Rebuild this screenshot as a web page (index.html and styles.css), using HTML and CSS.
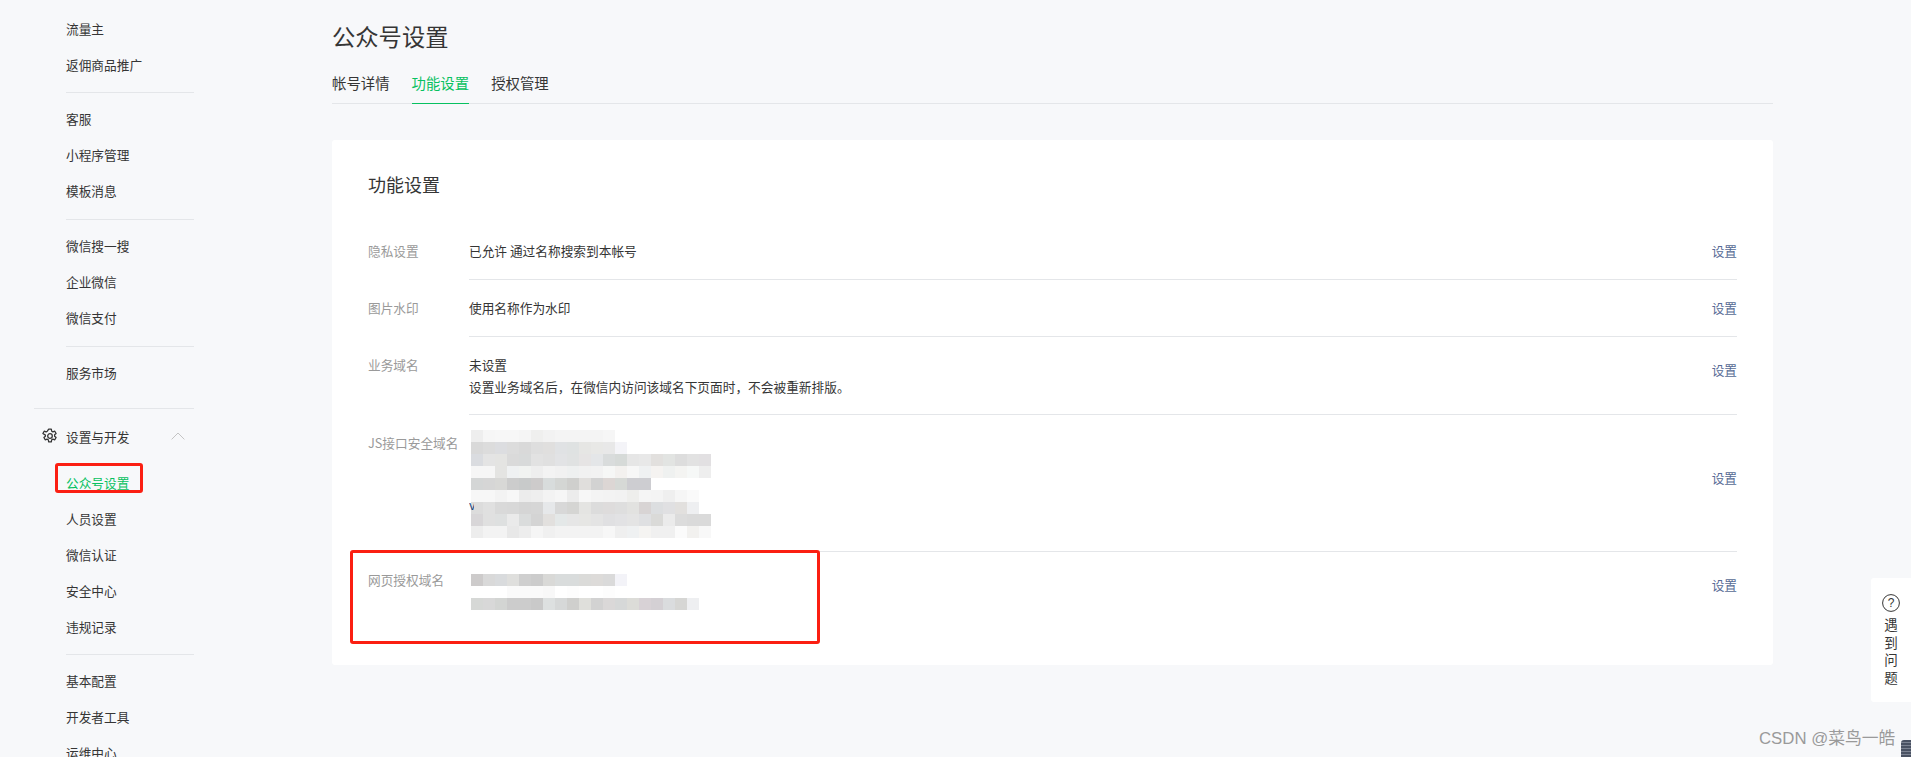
FILE: index.html
```html
<!DOCTYPE html>
<html lang="zh-CN">
<head>
<meta charset="utf-8">
<title>公众号设置</title>
<link rel="stylesheet" href="styles.css">
</head>
<body>
<div class="page">
  <nav class="side">
    <ul class="group first">
      <li>流量主</li>
      <li>返佣商品推广</li>
    </ul>
    <ul class="group">
      <li>客服</li>
      <li>小程序管理</li>
      <li>模板消息</li>
    </ul>
    <ul class="group">
      <li>微信搜一搜</li>
      <li>企业微信</li>
      <li>微信支付</li>
    </ul>
    <ul class="group">
      <li>服务市场</li>
    </ul>
    <div class="sec">
      <div class="sec-head">
        <svg class="gear" viewBox="0 0 16 16" width="16" height="16"><path d="M6.7 1.2h2.6l.4 2 1.2.7 1.9-.7 1.3 2.3-1.5 1.3v1.4l1.5 1.3-1.3 2.3-1.9-.7-1.2.7-.4 2H6.7l-.4-2-1.2-.7-1.9.7-1.3-2.3 1.5-1.3V7.1L.9 5.5l1.3-2.3 1.9.7 1.2-.7z" fill="none" stroke="#353535" stroke-width="1.3" stroke-linejoin="round"/><circle cx="8" cy="8" r="2.3" fill="none" stroke="#353535" stroke-width="1.3"/></svg>
        <span class="sec-title">设置与开发</span>
        <svg class="chev" viewBox="0 0 14 8" width="14" height="8"><path d="M.6 7.4 7 1l6.4 6.4" fill="none" stroke="#c4c4c4" stroke-width="1"/></svg>
      </div>
      <ul class="sub">
        <li class="on">公众号设置</li>
        <li>人员设置</li>
        <li>微信认证</li>
        <li>安全中心</li>
        <li>违规记录</li>
      </ul>
    </div>
    <ul class="group">
      <li>基本配置</li>
      <li>开发者工具</li>
      <li>运维中心</li>
    </ul>
  </nav>
  <main class="main">
    <h1 class="title">公众号设置</h1>
    <div class="tabs">
      <span class="tab">帐号详情</span>
      <span class="tab on">功能设置</span>
      <span class="tab">授权管理</span>
    </div>
    <section class="card">
      <h2 class="card-title">功能设置</h2>
      <div class="row">
        <div class="lab">隐私设置</div>
        <div class="val">
          <div>已允许 通过名称搜索到本帐号</div>
          <a class="act">设置</a>
        </div>
      </div>
      <div class="row">
        <div class="lab">图片水印</div>
        <div class="val">
          <div>使用名称作为水印</div>
          <a class="act">设置</a>
        </div>
      </div>
      <div class="row">
        <div class="lab">业务域名</div>
        <div class="val val-tall">
          <div>未设置<br>设置业务域名后，在微信内访问该域名下页面时，不会被重新排版。</div>
          <a class="act act-low">设置</a>
        </div>
      </div>
      <div class="row">
        <div class="lab">JS接口安全域名</div>
        <div class="val val-js">
          <div class="mosaic" data-set="js"><span class="frag">v</span></div>
          <a class="act act-mid">设置</a>
        </div>
      </div>
      <div class="row">
        <div class="lab">网页授权域名</div>
        <div class="val val-last">
          <div class="mosaic" data-set="oauth"></div>
          <a class="act">设置</a>
        </div>
      </div>
    </section>
  </main>
</div>
<div class="mark mark-side"></div>
<div class="mark mark-row"></div>
<aside class="help">
  <svg viewBox="0 0 18 18" width="18" height="18"><circle cx="9" cy="9" r="8.4" fill="none" stroke="#353535" stroke-width="1"/><text x="9" y="13" text-anchor="middle" class="q">?</text></svg>
  <span>遇</span><span>到</span><span>问</span><span>题</span>
</aside>
<div class="wm">CSDN @菜鸟一皓</div>
<div class="corner"></div>
<script src="mosaic.js"></script>
</body>
</html>
```
FILE: styles.css
```css
* { box-sizing: border-box; }
html, body { margin: 0; height: 100%; overflow: hidden; }
body {
  background: #f7f8fa;
  color: #353535;
  font-family: "Noto Sans CJK SC", "Liberation Sans", sans-serif;
}
ul { list-style: none; margin: 0; padding: 0; }
.page { display: flex; height: 757px; overflow: hidden; }
.side { width: 332px; flex: none; padding: 11px 0 0 66px; }
.group, .sub { width: 128px; }
.group li, .sub li { height: 36px; line-height: 35px; font-size: 12.7px; white-space: nowrap; }
.group { border-top: 1px solid #e4e6e9; padding-top: 8px; margin-top: 10px; }
.group.first { border-top: 0; padding-top: 0; margin-top: 0; margin-bottom: -1px; }
.sec { margin: 17px 0 9px -32px; border-top: 1px solid #e4e6e9; padding-top: 9px; width: 160px; }
.sec + .group { margin-top: 0; }
.sub { margin: 11px 0 0 32px; }
.sub li.on { color: #07c160; }
.sec-head { display: flex; align-items: center; height: 36px; padding-left: 8px; }
.gear { margin-right: 8px; flex: none; }
.sec-title { font-size: 12.7px; flex: 1; }
.chev { margin-right: 9px; }
.main { width: 1441px; flex: none; }
.title { margin: 0; font-weight: 400; font-size: 23.3px; line-height: 32px; padding-top: 20px; color: #353535; }
.tabs { display: flex; gap: 22px; margin-top: 14px; border-bottom: 1px solid #e4e6e9; height: 38px; }
.tab { font-size: 14.4px; line-height: 33px; height: 38px; }
.tab.on { color: #07c160; border-bottom: 1px solid #07c160; }
.card { margin-top: 36px; background: #fff; border-radius: 3px; height: 525px; padding: 0 36px; }
.card-title { margin: 0; font-weight: 400; font-size: 18px; line-height: 26px; padding-top: 31px; height: 83px; }
.row { display: flex; font-size: 12.7px; line-height: 22px; }
.lab { width: 101px; flex: none; color: #9a9a9a; white-space: nowrap; padding-top: 17px; }
.val { flex: 1; display: flex; justify-content: space-between; align-items: flex-start; padding: 17px 0; border-bottom: 1px solid #e4e6e9; }
.val-tall { padding-bottom: 16px; }
.val-js { padding: 15px 0 13px; }
.val-last { padding-top: 22px; border-bottom: 0; }
.act { color: #576b95; white-space: nowrap; }
.act-low { margin-top: 5px; }
.act-mid { margin-top: 37px; }
.val-last .act { margin-top: 0; }
.mosaic { margin-left: 2px; position: relative; }
.mosaic-row { display: flex; height: 12px; }
.mosaic-cell { width: 12px; height: 12px; flex: none; }
.frag { position: absolute; left: -2px; top: 68px; width: 5px; height: 14px; overflow: hidden; font-size: 12.7px; line-height: 14px; color: #1f4a80; }
.mark { position: absolute; border: 3px solid #fb1f12; border-radius: 3px; }
.mark-side { left: 55px; top: 463px; width: 88px; height: 30px; }
.mark-row { left: 350px; top: 550px; width: 470px; height: 94px; }
.help {
  position: absolute; left: 1871px; top: 578px; width: 40px; height: 124px;
  background: #fff; border-radius: 3px 0 0 3px;
  display: flex; flex-direction: column; align-items: center;
  padding-top: 16px; font-size: 13.5px; line-height: 17.5px; color: #353535;
}
.help svg { margin-bottom: 4px; }
.q { font-size: 12px; fill: #353535; font-family: "Liberation Sans", sans-serif; }
.wm { position: absolute; left: 1759px; top: 727px; font-size: 16.8px; line-height: 24px; color: #9a9a9a; white-space: nowrap; font-family: "Liberation Sans", "Noto Sans CJK SC", sans-serif; }
.corner { position: absolute; left: 1901px; top: 740px; width: 10px; height: 17px; border-radius: 3px 0 0 0; background: repeating-linear-gradient(#4a5263 0 2px, #7b8291 2px 3px); }
```
FILE: mosaic.js
```js
var MOSAICS = {
  js: [
    "eee f6f6f6 f7f7f7 f7f7f7 f5f5f5 efefee f2f2f2 f4f4f4 f4f4f4 f4f4f4 f4f4f4 f6f6f6",
    "d9d9d9 dcdcdc dcdde0 dcdcdc d9d9d9 dedede e0dfde e0e2e4 dfe2e2 e6e6e4 e8e8e6 e8e8e8 f4f4f8",
    "dadce0 e4e4e4 e4e4e2 dadada d8dada e2e2e2 e0e0e0 e2e3e5 e0e2e2 e6e4e4 e4e6e8 d9dcdc d6dad8 e6e6e6 e8e8e8 e2e0de e2e4e2 dddddd e2e2e2 e2e0e2",
    "f6f6f6 f6f6f6 e4e4e2 eff1f2 f1f3f1 eeeeee f3f3f3 f1f1f1 eef0f0 f1f1f1 f2f2f2 f6f7f6 f3f1ef f7f7f7 eff1f2 f5f3f1 eff1f0 f4f4f2 f6f8f7 eeeeee",
    "d4d6d6 d6d6d6 d8d8d6 cccccc c8caca cdcbcb d8dcdc d4d6d4 cfcfcd e0dedc d2d2d2 dcd6d4 d6d9d6 cdcdd1 cdcdd1",
    "f7f7f7 f7f7f7 f3f3f3 f7f7f7 ececec eeeeee f3f3f3 f6f6f6 ececec f7f7f7 f4f4f4 f3f3f3 f2f2f2 eeeeec f5f5f5 f4f4f4 efefef f6f6f6 fafafa",
    "dcdcdc e0e0e0 d9d9d9 d8d8d8 d5d5d5 d6d6d6 e6e8ea d8d8d8 d5d5d3 e4e4e2 dcdcdc dedcdc dedede e2e2e0 d8d4d4 dcdee0 e0e0e2 e2e0de eeeff1",
    "d8d6d8 e0e0e0 dee0e0 eaeaea dadcdc d4d4d4 e2e0de e4e8e8 e6e6e6 e6e6e4 e4e4e4 e0e0e2 e2e2e4 e4e4e4 dfe0e2 dadad8 ebebeb dcdcdc dadada dadada",
    "ededed f3f3f3 f3f3f3 e8e8e8 ededed f5f5f5 f0f0f0 f3f3f3 f3f3f3 f3f3f3 f3f3f3 f7f7f7 efefef eff1f2 f5f4f2 f0f0f0 f0f0f0 fbfbfb f2f1ef f8f8f8"
  ],
  oauth: [
    "cdcbcb d9d9d9 d9dbdd dfdfdd cfcfcf cccccc d9d9d7 d9dcdc d9dcdc dbdbd9 dddbd9 dadada f3f3f8",
    "fff fff fff fafafa fafafa fafafa f8f8f8 fff fdfdfd fff fff fdfdfd",
    "d6d8d6 d8d8d8 d3d5d3 cccccc cccccc c9c9c9 dde0e0 d6d8d8 cfcfcd dfdfdb d2d2d2 dad8d8 d6d8d8 dcdcd8 d8d2d6 d4d0d4 dadcde d6d6d4 eeeff1"
  ]
};
document.querySelectorAll(".mosaic").forEach(function (box) {
  MOSAICS[box.dataset.set].forEach(function (line) {
    var row = document.createElement("div");
    row.className = "mosaic-row";
    line.split(" ").forEach(function (hex) {
      var cell = document.createElement("span");
      cell.className = "mosaic-cell";
      cell.style.background = "#" + hex;
      row.appendChild(cell);
    });
    box.appendChild(row);
  });
});
```
